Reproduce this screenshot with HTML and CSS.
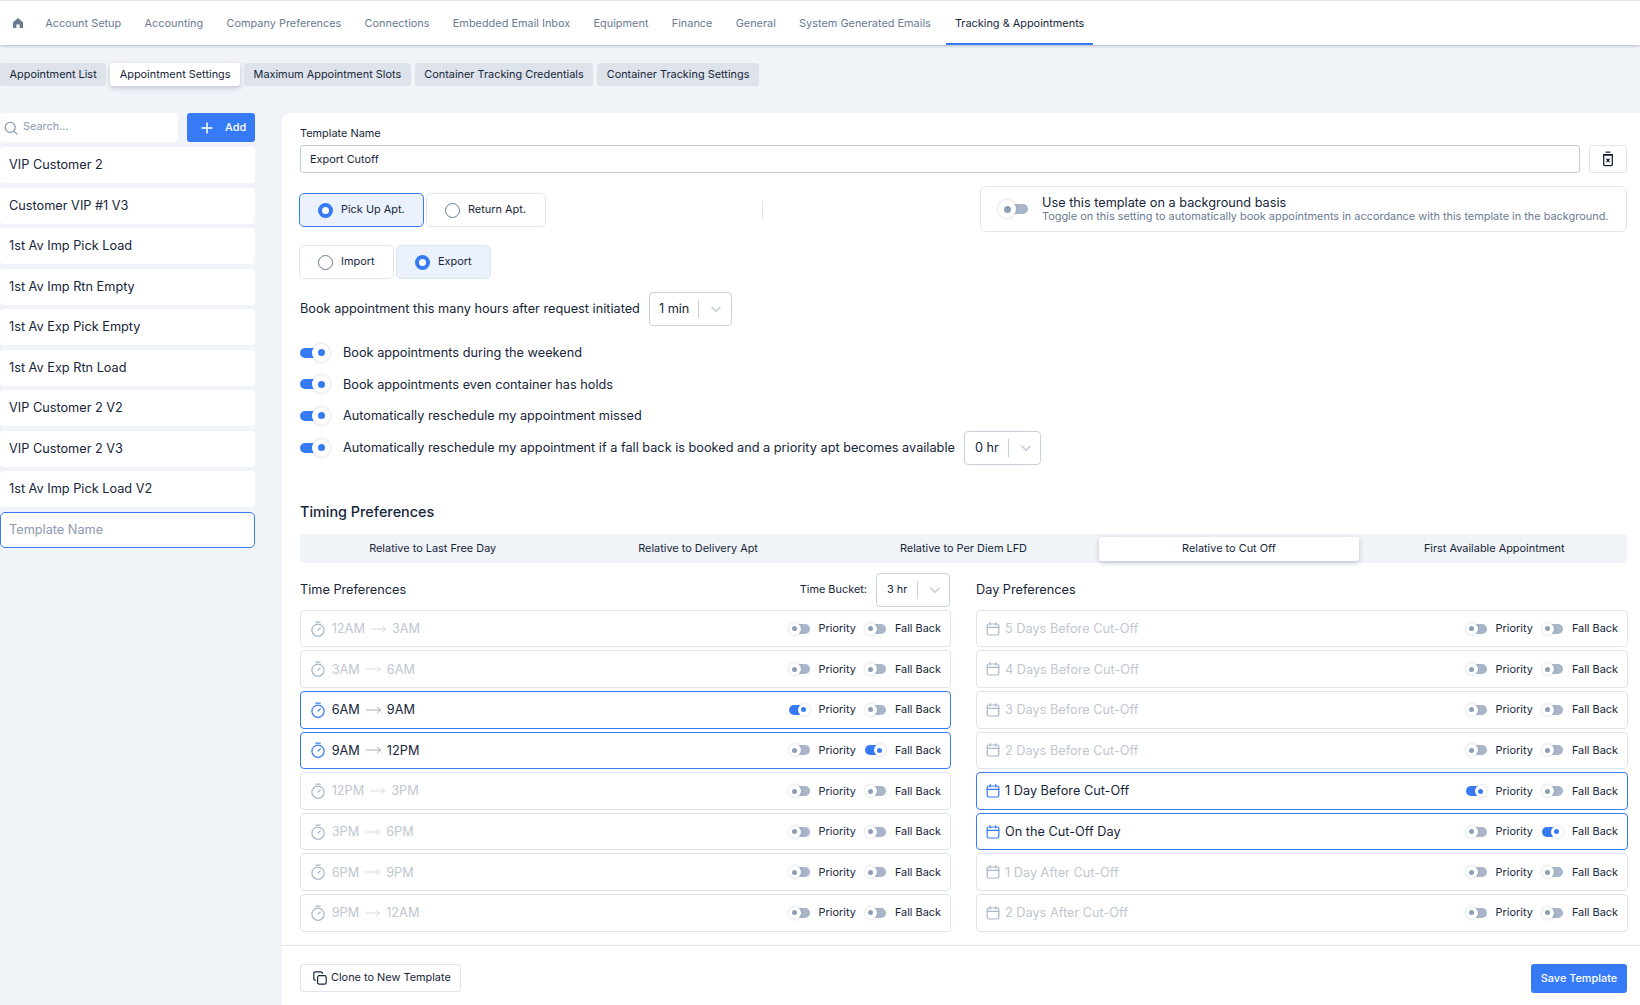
FILE: index.html
```html
<!DOCTYPE html>
<html lang="en">
<head>
<meta charset="utf-8">
<title>Appointment Settings</title>
<link rel="stylesheet" href="styles.css">
</head>
<body>
<svg class="defs" width="0" height="0" aria-hidden="true">
  <symbol id="i-clock" viewBox="0 0 16 16"><g fill="none" stroke="currentColor" stroke-width="1.2" stroke-linecap="round"><circle cx="8" cy="9.2" r="6.1"/><path d="M5.8 1.2h4.4"/><path d="M8 9.2l2.2-2.2"/></g></symbol>
  <symbol id="i-cal" viewBox="0 0 16 16"><g fill="none" stroke="currentColor" stroke-width="1.2" stroke-linecap="round"><rect x="2.2" y="3" width="11.6" height="11" rx="1.4"/><path d="M2.2 6.4h11.6M5.2 1.5v2.6M10.8 1.5v2.6"/></g></symbol>
  <symbol id="i-arrow" viewBox="0 0 15 8"><path d="M0 4h14.5M11 1l3.5 3-3.5 3" fill="none" stroke="currentColor" stroke-width=".9"/></symbol>
  <symbol id="i-chev" viewBox="0 0 12 8"><path d="M1.5 1.8L6 6.2l4.5-4.4" fill="none" stroke="currentColor" stroke-width="1.4"/></symbol>
</svg>

<header class="topnav">
  <a class="topnav-home"><svg width="12" height="12" viewBox="0 0 12 12"><path d="M6 1L1 5.2V11h3.4V7.6h3.2V11H11V5.2z" fill="#6a7b92"/></svg></a>
  <a class="topnav-link">Account Setup</a>
  <a class="topnav-link">Accounting</a>
  <a class="topnav-link">Company Preferences</a>
  <a class="topnav-link">Connections</a>
  <a class="topnav-link">Embedded Email Inbox</a>
  <a class="topnav-link">Equipment</a>
  <a class="topnav-link">Finance</a>
  <a class="topnav-link">General</a>
  <a class="topnav-link">System Generated Emails</a>
  <a class="topnav-link is-active">Tracking &amp; Appointments</a>
</header>

<nav class="subtabs">
  <a class="subtab">Appointment List</a>
  <a class="subtab is-active">Appointment Settings</a>
  <a class="subtab">Maximum Appointment Slots</a>
  <a class="subtab">Container Tracking Credentials</a>
  <a class="subtab">Container Tracking Settings</a>
</nav>

<div class="workspace">
  <aside class="sidebar">
    <div class="sidebar-tools">
      <label class="search">
        <svg width="14" height="14" viewBox="0 0 14 14"><g fill="none" stroke="#8799b0" stroke-width="1.2" stroke-linecap="round"><circle cx="6.2" cy="6.4" r="5"/><path d="M10 10.2l3 3"/></g></svg>
        <span>Search...</span>
      </label>
      <button class="add-btn"><svg width="12" height="12" viewBox="0 0 12 12"><path d="M6 .5v11M.5 6h11" stroke="#fff" stroke-width="1.5"/></svg><span>Add</span></button>
    </div>
    <ul class="tpl-list">
      <li class="tpl">VIP Customer 2</li>
      <li class="tpl">Customer VIP #1 V3</li>
      <li class="tpl">1st Av Imp Pick Load</li>
      <li class="tpl">1st Av Imp Rtn Empty</li>
      <li class="tpl">1st Av Exp Pick Empty</li>
      <li class="tpl">1st Av Exp Rtn Load</li>
      <li class="tpl">VIP Customer 2 V2</li>
      <li class="tpl">VIP Customer 2 V3</li>
      <li class="tpl">1st Av Imp Pick Load V2</li>
      <li class="tpl is-editing">Template Name</li>
    </ul>
  </aside>

  <main class="panel">
    <div class="panel-body">
      <div class="field-label">Template Name</div>
      <div class="name-row">
        <div class="name-input">Export Cutoff</div>
        <button class="icon-btn"><svg width="12" height="16" viewBox="0 0 12 16"><g fill="none" stroke="#16263a" stroke-width="1.3"><path d="M1.7 4h8.6v9.6a1 1 0 0 1-1 1H2.7a1 1 0 0 1-1-1z"/><path d="M1 3.6h10M3.5 1.2h5"/><path d="M4.5 7.8l3 3.2M7.5 7.8l-3 3.2"/></g></svg></button>
      </div>

      <div class="mode-row">
        <div class="radios">
          <div class="radio is-on is-strong"><i class="dot"></i>Pick Up Apt.</div>
          <div class="radio"><i class="dot"></i>Return Apt.</div>
        </div>
        <i class="vrule"></i>
        <div class="bg-card">
          <span class="tg tg-lg"><i></i></span>
          <div class="bg-text">
            <div class="bg-title">Use this template on a background basis</div>
            <div class="bg-sub">Toggle on this setting to automatically book appointments in accordance with this template in the background.</div>
          </div>
        </div>
      </div>

      <div class="radios radios-second">
        <div class="radio radio-sm"><i class="dot"></i>Import</div>
        <div class="radio radio-sm is-on"><i class="dot"></i>Export</div>
      </div>

      <div class="hours-row">
        <span>Book appointment this many hours after request initiated</span>
        <div class="select select-min"><span>1 min</span><i class="sep"></i><svg width="12" height="8"><use href="#i-chev"/></svg></div>
      </div>

      <div class="opts">
        <div class="opt"><span class="tg tg-lg on"><i></i></span>Book appointments during the weekend</div>
        <div class="opt"><span class="tg tg-lg on"><i></i></span>Book appointments even container has holds</div>
        <div class="opt"><span class="tg tg-lg on"><i></i></span>Automatically reschedule my appointment missed</div>
        <div class="opt"><span class="tg tg-lg on"><i></i></span>Automatically reschedule my appointment if a fall back is booked and a priority apt becomes available
          <div class="select select-hr"><span>0 hr</span><i class="sep"></i><svg width="12" height="8"><use href="#i-chev"/></svg></div>
        </div>
      </div>

      <h2 class="timing-title">Timing Preferences</h2>
      <div class="timing-tabs">
        <a class="ttab">Relative to Last Free Day</a>
        <a class="ttab">Relative to Delivery Apt</a>
        <a class="ttab">Relative to Per Diem LFD</a>
        <a class="ttab is-active">Relative to Cut Off</a>
        <a class="ttab">First Available Appointment</a>
      </div>

      <div class="prefs">
        <section class="pref-col">
          <div class="pref-head">
            <h3>Time Preferences</h3>
            <div class="bucket"><span>Time Bucket:</span>
              <div class="select select-bucket"><span>3 hr</span><i class="sep"></i><svg width="12" height="8"><use href="#i-chev"/></svg></div>
            </div>
          </div>
          <div class="row"><svg class="ico"><use href="#i-clock"/></svg><span class="t1">12AM</span><svg class="arr"><use href="#i-arrow"/></svg><span>3AM</span><div class="sw"><span class="tg"><i></i></span><b>Priority</b><span class="tg"><i></i></span><b>Fall Back</b></div></div>
          <div class="row"><svg class="ico"><use href="#i-clock"/></svg><span class="t1">3AM</span><svg class="arr"><use href="#i-arrow"/></svg><span>6AM</span><div class="sw"><span class="tg"><i></i></span><b>Priority</b><span class="tg"><i></i></span><b>Fall Back</b></div></div>
          <div class="row is-sel"><svg class="ico"><use href="#i-clock"/></svg><span class="t1">6AM</span><svg class="arr"><use href="#i-arrow"/></svg><span>9AM</span><div class="sw"><span class="tg on"><i></i></span><b>Priority</b><span class="tg"><i></i></span><b>Fall Back</b></div></div>
          <div class="row is-sel"><svg class="ico"><use href="#i-clock"/></svg><span class="t1">9AM</span><svg class="arr"><use href="#i-arrow"/></svg><span>12PM</span><div class="sw"><span class="tg"><i></i></span><b>Priority</b><span class="tg on"><i></i></span><b>Fall Back</b></div></div>
          <div class="row"><svg class="ico"><use href="#i-clock"/></svg><span class="t1">12PM</span><svg class="arr"><use href="#i-arrow"/></svg><span>3PM</span><div class="sw"><span class="tg"><i></i></span><b>Priority</b><span class="tg"><i></i></span><b>Fall Back</b></div></div>
          <div class="row"><svg class="ico"><use href="#i-clock"/></svg><span class="t1">3PM</span><svg class="arr"><use href="#i-arrow"/></svg><span>6PM</span><div class="sw"><span class="tg"><i></i></span><b>Priority</b><span class="tg"><i></i></span><b>Fall Back</b></div></div>
          <div class="row"><svg class="ico"><use href="#i-clock"/></svg><span class="t1">6PM</span><svg class="arr"><use href="#i-arrow"/></svg><span>9PM</span><div class="sw"><span class="tg"><i></i></span><b>Priority</b><span class="tg"><i></i></span><b>Fall Back</b></div></div>
          <div class="row"><svg class="ico"><use href="#i-clock"/></svg><span class="t1">9PM</span><svg class="arr"><use href="#i-arrow"/></svg><span>12AM</span><div class="sw"><span class="tg"><i></i></span><b>Priority</b><span class="tg"><i></i></span><b>Fall Back</b></div></div>
        </section>
        <section class="pref-col">
          <div class="pref-head">
            <h3>Day Preferences</h3>
          </div>
          <div class="row"><svg class="ico ico-cal"><use href="#i-cal"/></svg><span>5 Days Before Cut-Off</span><div class="sw"><span class="tg"><i></i></span><b>Priority</b><span class="tg"><i></i></span><b>Fall Back</b></div></div>
          <div class="row"><svg class="ico ico-cal"><use href="#i-cal"/></svg><span>4 Days Before Cut-Off</span><div class="sw"><span class="tg"><i></i></span><b>Priority</b><span class="tg"><i></i></span><b>Fall Back</b></div></div>
          <div class="row"><svg class="ico ico-cal"><use href="#i-cal"/></svg><span>3 Days Before Cut-Off</span><div class="sw"><span class="tg"><i></i></span><b>Priority</b><span class="tg"><i></i></span><b>Fall Back</b></div></div>
          <div class="row"><svg class="ico ico-cal"><use href="#i-cal"/></svg><span>2 Days Before Cut-Off</span><div class="sw"><span class="tg"><i></i></span><b>Priority</b><span class="tg"><i></i></span><b>Fall Back</b></div></div>
          <div class="row is-sel"><svg class="ico ico-cal"><use href="#i-cal"/></svg><span>1 Day Before Cut-Off</span><div class="sw"><span class="tg on"><i></i></span><b>Priority</b><span class="tg"><i></i></span><b>Fall Back</b></div></div>
          <div class="row is-sel"><svg class="ico ico-cal"><use href="#i-cal"/></svg><span>On the Cut-Off Day</span><div class="sw"><span class="tg"><i></i></span><b>Priority</b><span class="tg on"><i></i></span><b>Fall Back</b></div></div>
          <div class="row"><svg class="ico ico-cal"><use href="#i-cal"/></svg><span>1 Day After Cut-Off</span><div class="sw"><span class="tg"><i></i></span><b>Priority</b><span class="tg"><i></i></span><b>Fall Back</b></div></div>
          <div class="row"><svg class="ico ico-cal"><use href="#i-cal"/></svg><span>2 Days After Cut-Off</span><div class="sw"><span class="tg"><i></i></span><b>Priority</b><span class="tg"><i></i></span><b>Fall Back</b></div></div>
        </section>
      </div>
    </div>

    <footer class="panel-foot">
      <button class="clone-btn"><svg width="14" height="14" viewBox="0 0 14 14"><g fill="none" stroke="#16263a" stroke-width="1.2"><rect x="4.6" y="4.6" width="8.6" height="8.6" rx="1.6"/><path d="M2.8 9.4h-.3A1.7 1.7 0 0 1 .8 7.7V2.5A1.7 1.7 0 0 1 2.5.8h5.2a1.7 1.7 0 0 1 1.7 1.7v.3"/></g></svg>Clone to New Template</button>
      <button class="save-btn">Save Template</button>
    </footer>
  </main>
</div>
</body>
</html>
```

FILE: styles.css
```css
* { box-sizing: border-box; }
html, body { margin: 0; height: 100%; }
body {
  width: 1640px; height: 1005px; overflow: hidden;
  background: #f0f3f8; color: #16263a;
  font: 400 12.72px/1.2 Inter, "Liberation Sans", sans-serif;
  display: flex; flex-direction: column;
}
.defs { position: absolute; }
button { font: inherit; color: inherit; }
a { display: block; }
ul { list-style: none; margin: 0; padding: 0; }
h2, h3 { margin: 0; font-weight: 400; }

.topnav {
  height: 45px; flex: none; background: #fff;
  border-top: 1px solid #dfe5ee;
  box-shadow: 0 1px 3px rgba(60, 80, 110, .35);
  display: flex; align-items: stretch; font-size: 10.92px; color: #6a7b92;
  padding-left: 12px; position: relative;
}
.topnav-home { display: flex; align-items: center; width: 21px; margin-right: .5px; }
.topnav-link { display: flex; align-items: center; padding: 1px 11.63px 0; }
.topnav-link.is-active { color: #16263a; box-shadow: inset 0 -2px 0 #367bf5; padding: 1px 9px 0; margin-left: 3.5px; }

.subtabs { display: flex; gap: 4px; margin-top: 18px; height: 23px; flex: none; font-size: 10.92px; }
.subtab { padding: 0 9.5px; line-height: 23px; background: #dee3eb; border-radius: 3px; }
.subtab.is-active { background: #fff; box-shadow: 0 2px 5px rgba(60, 80, 110, .28); }

.workspace { flex: 1; min-height: 0; display: flex; margin-top: 27px; }
.sidebar { width: 255px; flex: none; margin-right: 27px; }
.sidebar-tools { display: flex; gap: 9px; height: 29px; margin-bottom: 5px; }
.search { flex: 1; background: #fff; border-radius: 4px; display: flex; align-items: center; gap: 5px; padding: 0 0 0 4px; font-size: 10.92px; color: #8a9ab0; }
.search span { margin-bottom: 2px; }
.add-btn { width: 68px; border: 0; border-radius: 3px; background: #367bf5; color: #fff; display: flex; align-items: center; gap: 12px; padding: 0 0 0 14px; font-size: 10.92px; font-weight: 500; }
.tpl-list { display: grid; grid-auto-rows: 36px; row-gap: 4.5px; }
.tpl { background: #fff; border-radius: 4px; padding: 0 9px; display: flex; align-items: center; }
.tpl.is-editing { color: #8a9ab0; border: 1px solid #367bf5; padding: 0 8px; border-radius: 5px; }

.panel { flex: 1; min-width: 0; background: #fff; border-top-left-radius: 8px; display: flex; flex-direction: column; }
.panel-body { flex: 1; padding: 13px 13px 0 18px; }
.field-label { font-size: 10.92px; line-height: 14px; margin-bottom: 5px; }
.name-row { display: flex; gap: 9px; height: 28px; }
.name-input { flex: 1; border: 1px solid #c3cddb; border-radius: 3px; padding: 1px 9px 0; display: flex; align-items: center; font-size: 10.92px; }
.icon-btn { width: 38px; background: #fff; border: 1px solid #dfe5ee; border-radius: 3px; padding: 0; display: flex; align-items: center; justify-content: center; }

.mode-row { display: flex; align-items: flex-start; margin-top: 20px; height: 46px; }
.radios { display: flex; gap: 2px; margin-left: -1px; }
.radio { display: flex; align-items: center; height: 34px; width: 120px; padding-left: 18px; gap: 8px; border: 1px solid #dfe5ee; border-radius: 5px; font-size: 10.92px; }
.radio.is-on { background: #ebf1fd; }
.radio.is-strong { width: 125px; border-color: #367bf5; }
.radio-sm { width: 95px; }
.dot { width: 15px; height: 15px; border-radius: 50%; border: 1px solid #6a7b92; background: #fff; flex: none; }
.is-on .dot { border: 4.5px solid #367bf5; }
.vrule { width: 1px; height: 18px; background: #dfe5ee; margin: 8px 0 0 216px; }
.bg-card { margin-left: auto; width: 647px; height: 46px; margin-top: -7px; border: 1px solid #dfe5ee; border-radius: 6px; display: flex; align-items: center; padding-left: 17px; gap: 14px; }
.bg-title { line-height: 15px; }
.bg-sub { font-size: 10.92px; line-height: 13px; color: #6a7b92; white-space: nowrap; }
.radios-second { margin-top: 6px; }

.hours-row { display: flex; align-items: center; gap: 9px; margin-top: 13px; height: 34px; }
.select { display: flex; align-items: center; height: 34px; border: 1px solid #c9d1dc; border-radius: 4px; color: #16263a; }
.select svg { color: #c3cad4; flex: none; }
.sep { width: 1px; height: 18px; background: #c9d1dc; flex: none; }
.select-min { width: 83px; padding-left: 9px; }
.select-min .sep { margin: 0 11px 0 9px; }
.select-hr { width: 77px; padding-left: 10px; margin-left: 9px; }
.select-hr .sep { margin: 0 11px 0 9px; }
.select-bucket { width: 74px; padding-left: 10px; font-size: 10.92px; }
.select-bucket .sep { margin: 0 11px 0 10px; }

.opts { margin-top: 11px; }
.opt { display: flex; align-items: center; height: 31.6px; }
.tg { position: relative; display: inline-block; width: 21px; height: 12px; flex: none; }
.tg::before { content: ""; position: absolute; left: 6px; right: 0; top: 1px; height: 10px; border-radius: 5px; background: #a9b6c9; }
.tg i { position: absolute; left: 0; top: 0; width: 12px; height: 12px; border-radius: 50%; background: #fff; box-shadow: 0 0 3px rgba(60, 80, 110, .3); }
.tg i::after { content: ""; position: absolute; left: 3.5px; top: 3.5px; width: 5px; height: 5px; border-radius: 50%; background: #8d9db3; }
.tg.on::before { left: 0; right: 6px; background: #367bf5; }
.tg.on i { left: 9px; }
.tg.on i::after { background: #367bf5; }
.tg-lg { width: 30px; height: 18px; margin-right: 13px; }
.tg-lg::before { left: 9px; top: 4px; height: 10px; border-radius: 5px; }
.tg-lg i { width: 18px; height: 18px; }
.tg-lg i::after { left: 5.5px; top: 5.5px; width: 7px; height: 7px; }
.tg-lg.on::before { right: 9px; }
.tg-lg.on i { left: 12px; }
.bg-card .tg-lg { margin-right: 0; }

.timing-title { font-size: 14.4px; line-height: 18px; margin-top: 39.5px; font-weight: 500; }
.timing-tabs { display: grid; grid-template-columns: repeat(5, 1fr); height: 29px; margin-top: 13px; background: #f0f3f8; border-radius: 3px; }
.ttab { display: flex; align-items: center; justify-content: center; font-size: 10.92px; }
.ttab.is-active { background: #fff; border-radius: 3px; margin: 3px 3px 2px; box-shadow: 0 2px 5px rgba(60, 80, 110, .28); }

.prefs { display: grid; grid-template-columns: 651px 652px; column-gap: 25px; margin-top: 10px; }
.pref-col { display: grid; grid-auto-rows: 37.6px; row-gap: 3px; grid-template-rows: 34px; }
.pref-head { display: flex; align-items: center; justify-content: space-between; margin-bottom: 0; }
.pref-head h3 { font-size: 12.72px; }
.bucket { display: flex; align-items: center; gap: 9px; font-size: 10.92px; margin-right: 1px; }
.row { display: flex; align-items: center; border: 1px solid #dfe5ee; border-radius: 4px; padding: 0 9px; color: #c0c7d1; }
.row.is-sel { border-color: #367bf5; color: #16263a; }
.ico { width: 16px; height: 16px; color: #aab7c8; flex: none; margin-right: 5.7px; }
.ico-cal { margin-left: -1px; margin-right: 4px; }
.is-sel .ico { color: #367bf5; }
.arr { width: 15px; height: 8px; color: #d3d8e0; margin: 0 6px; flex: none; }
.is-sel .arr { color: #9aa7b8; }
.sw { margin-left: auto; display: flex; align-items: center; }
.sw b { font-weight: 400; font-size: 10.92px; color: #16263a; margin-left: 9px; }
.sw .tg + b + .tg { margin-left: 9px; }

.panel-foot { flex: none; height: 60px; border-top: 1px solid #dfe5ee; padding: 18px 13px 0 18px; display: flex; justify-content: space-between; align-items: flex-start; }
.clone-btn { height: 28px; width: 161px; background: #fff; border: 1px solid #dfe5ee; border-radius: 3px; display: flex; align-items: center; gap: 4px; padding: 0 0 0 12px; font-size: 10.92px; }
.save-btn { height: 29px; width: 96px; background: #367bf5; border: 0; border-radius: 3px; color: #fff; font-size: 10.92px; font-weight: 500; }
```
